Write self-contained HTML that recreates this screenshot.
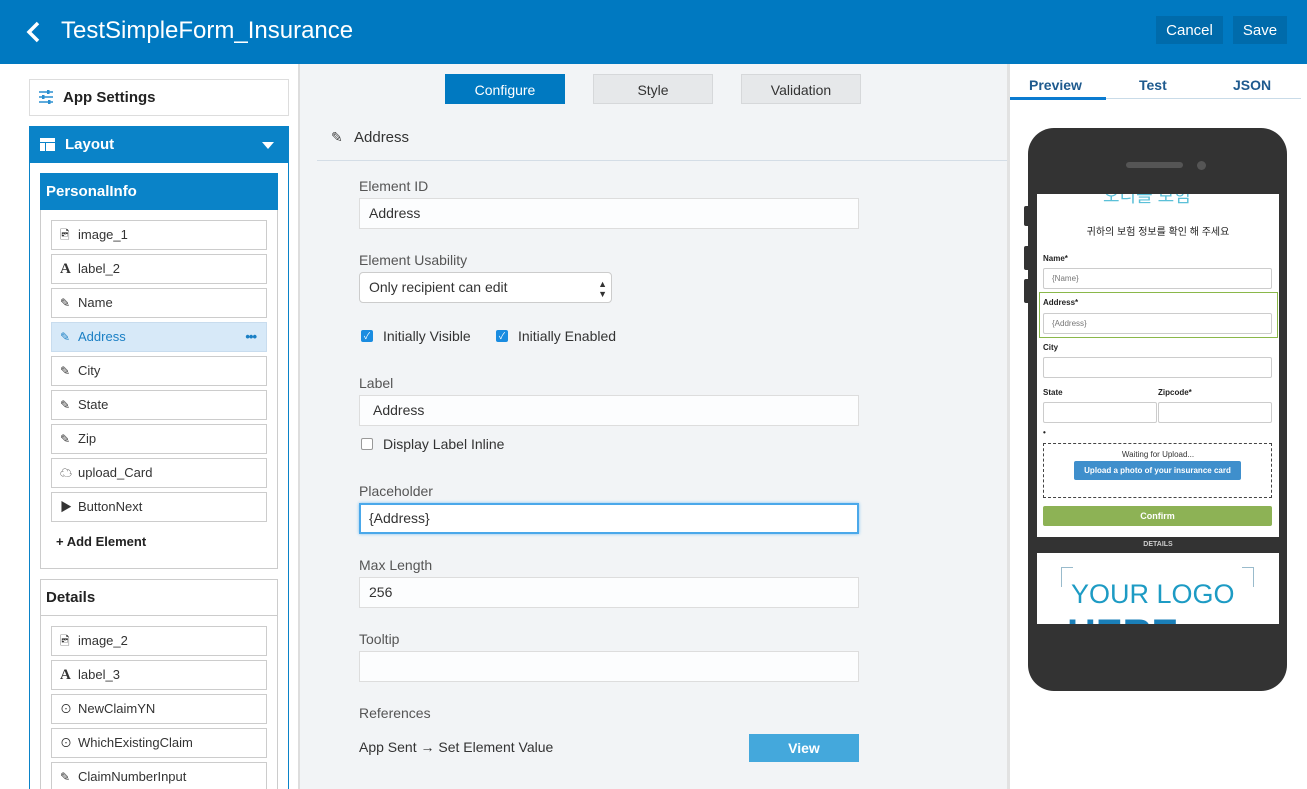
<!DOCTYPE html>
<html style="overflow:hidden"><head><meta charset="utf-8"><style>
*{box-sizing:border-box;margin:0;padding:0}
html,body{width:1307px;height:789px;overflow:hidden}
body{font-family:"Liberation Sans","Noto Sans CJK KR",sans-serif;background:#f2f4f6;position:relative;color:#333}
.abs{position:absolute}
.hdr{left:0;top:0;width:1307px;height:64px;background:#0079c1}
.hbtn{top:16px;height:28px;background:#006bab;color:#fff;font-size:15px;line-height:28px;text-align:center}
.left{left:0;top:64px;width:300px;height:725px;background:#fff;border-right:2px solid #ddd}
.item{left:51px;width:216px;height:30px;border:1px solid #ccc;background:#fff;font-size:13px;line-height:28px;padding-left:26px;color:#333}
.item i{position:absolute;left:8px;top:0;font-style:normal;font-size:12px}
.tab{top:74px;width:120px;height:30px;font-size:14px;line-height:30px;text-align:center;background:#e6e8ea;border:1px solid #d6d8da;color:#333}
.lbl{left:359px;font-size:14px;color:#555}
.inp{left:359px;width:500px;height:31px;border:1px solid #ddd;background:#fcfdfe;font-size:14px;line-height:29px;padding-left:9px;color:#333}
.cb{width:12px;height:12px;background:#1a8ce0;border-radius:2px;color:#fff;font-size:9px;line-height:12px;text-align:center}
.right{left:1007px;top:64px;width:300px;height:725px;background:#fff}
.ph{font-size:8px;font-weight:bold;color:#222}
.pin{height:21px;border:1px solid #ccc;border-radius:2px;font-size:8px;color:#777;line-height:19px;padding-left:8px;background:#fff}
</style></head><body>
<div class="abs hdr"></div>
<svg class="abs" style="left:24px;top:20px" width="18" height="24"><path d="M14 3 L5 12 L14 21" stroke="#fff" stroke-width="3.5" fill="none"/></svg>
<div class="abs" style="left:61px;top:17px;color:#fff;font-size:24px">TestSimpleForm_Insurance</div>
<div class="abs hbtn" style="left:1156px;width:67px;line-height:29px">Cancel</div>
<div class="abs hbtn" style="left:1233px;width:54px;line-height:29px">Save</div>

<div class="abs left"></div>
<div class="abs" style="left:29px;top:79px;width:260px;height:37px;border:1px solid #ddd;background:#fff"></div>
<svg class="abs" style="left:39px;top:90px" width="14" height="14"><g stroke="#2a8fd0" stroke-width="1.6"><path d="M0 2H14M0 7H14M0 12H14"/></g><g fill="#2a8fd0"><rect x="8" y="0" width="2.5" height="4"/><rect x="3" y="5" width="2.5" height="4"/><rect x="9" y="10" width="2.5" height="4"/></g></svg>
<div class="abs" style="left:63px;top:89px;font-size:15px;font-weight:bold;color:#222">App Settings</div>
<div class="abs" style="left:29px;top:126px;width:260px;height:670px;border:1px solid #0a83c8;background:#fff"></div>
<div class="abs" style="left:29px;top:126px;width:260px;height:37px;background:#0a83c8"></div>
<svg class="abs" style="left:40px;top:138px" width="15" height="13"><rect x="0" y="0" width="15" height="4" fill="#fff"/><rect x="0" y="5" width="5" height="8" fill="#fff"/><rect x="6" y="5" width="9" height="8" fill="#fff"/></svg>
<div class="abs" style="left:65px;top:136px;font-size:15px;font-weight:bold;color:#fff">Layout</div>
<svg class="abs" style="left:262px;top:142px" width="12" height="7"><path d="M0 0H12L6 7Z" fill="#fff"/></svg>
<div class="abs" style="left:40px;top:173px;width:238px;height:396px;border:1px solid #ccc"></div>
<div class="abs" style="left:40px;top:173px;width:238px;height:37px;background:#0a83c8;color:#fff;font-weight:bold;font-size:15px;line-height:37px;padding-left:6px">PersonalInfo</div>
<div class="abs item" style="top:220px"><i>🖻</i>image_1</div>
<div class="abs item" style="top:254px"><i style="font-family:'Liberation Serif';font-size:15px;font-weight:bold">A</i>label_2</div>
<div class="abs item" style="top:288px"><i>✎</i>Name</div>
<div class="abs item" style="top:322px;background:#d7e9f8;border-color:#c8dcee;color:#1a7fc4"><i>✎</i>Address<span style="position:absolute;right:10px;font-weight:bold;letter-spacing:-1px">•••</span></div>
<div class="abs item" style="top:356px"><i>✎</i>City</div>
<div class="abs item" style="top:390px"><i>✎</i>State</div>
<div class="abs item" style="top:424px"><i>✎</i>Zip</div>
<div class="abs item" style="top:458px"><i>☁</i>upload_Card</div>
<div class="abs item" style="top:492px"><i>▶</i>ButtonNext</div>
<div class="abs" style="left:56px;top:534px;font-size:13px;font-weight:bold;color:#222">+ Add Element</div>
<div class="abs" style="left:40px;top:579px;width:238px;height:220px;border:1px solid #ccc"></div>
<div class="abs" style="left:40px;top:579px;width:238px;height:37px;border-bottom:1px solid #ccc;font-weight:bold;font-size:15px;line-height:37px;padding-left:6px;color:#222">Details</div>
<div class="abs item" style="top:626px"><i>🖻</i>image_2</div>
<div class="abs item" style="top:660px"><i style="font-family:'Liberation Serif';font-size:15px;font-weight:bold">A</i>label_3</div>
<div class="abs item" style="top:694px"><i>⊙</i>NewClaimYN</div>
<div class="abs item" style="top:728px"><i>⊙</i>WhichExistingClaim</div>
<div class="abs item" style="top:762px"><i>✎</i>ClaimNumberInput</div>

<div class="abs tab" style="left:445px;background:#0079c1;border-color:#0079c1;color:#fff">Configure</div>
<div class="abs tab" style="left:593px">Style</div>
<div class="abs tab" style="left:741px">Validation</div>
<div class="abs" style="left:331px;top:129px;font-size:14px;color:#444">✎</div>
<div class="abs" style="left:354px;top:129px;font-size:15px;color:#333">Address</div>
<div class="abs" style="left:317px;top:160px;width:690px;height:1px;background:#d4dde6"></div>
<div class="abs lbl" style="top:178px">Element ID</div>
<div class="abs inp" style="top:198px">Address</div>
<div class="abs lbl" style="top:252px">Element Usability</div>
<div class="abs inp" style="top:272px;width:253px;background:#fff;border-color:#ccc;border-radius:4px">Only recipient can edit<span style="position:absolute;right:4px;top:0;font-size:9px;line-height:10px;top:6px">▲<br>▼</span></div>
<div class="abs cb" style="left:361px;top:330px">✓</div>
<div class="abs" style="left:383px;top:328px;font-size:14px">Initially Visible</div>
<div class="abs cb" style="left:496px;top:330px">✓</div>
<div class="abs" style="left:518px;top:328px;font-size:14px">Initially Enabled</div>
<div class="abs lbl" style="top:375px">Label</div>
<div class="abs inp" style="top:395px;padding-left:13px">Address</div>
<div class="abs" style="left:361px;top:438px;width:12px;height:12px;border:1px solid #999;border-radius:2px;background:#fff"></div>
<div class="abs" style="left:383px;top:436px;font-size:14px">Display Label Inline</div>
<div class="abs lbl" style="top:483px">Placeholder</div>
<div class="abs inp" style="top:503px;border:2px solid #4aa8ea;box-shadow:0 0 3px #7cc0f0;background:#fff;line-height:27px;padding-left:8px">{Address}</div>
<div class="abs lbl" style="top:557px">Max Length</div>
<div class="abs inp" style="top:577px">256</div>
<div class="abs lbl" style="top:631px">Tooltip</div>
<div class="abs inp" style="top:651px"></div>
<div class="abs lbl" style="top:705px">References</div>
<div class="abs" style="left:359px;top:739px;font-size:14px">App Sent → Set Element Value</div>
<div class="abs" style="left:749px;top:734px;width:110px;height:28px;background:#44a8dc;color:#fff;font-size:14px;font-weight:bold;line-height:28px;text-align:center">View</div>

<div class="abs right"></div>
<div class="abs" style="left:1007px;top:64px;width:3px;height:725px;background:#e2e2e2"></div>
<div class="abs" style="left:1029px;top:77px;font-size:14px;font-weight:bold;color:#1e5a8e">Preview</div>
<div class="abs" style="left:1139px;top:77px;font-size:14px;font-weight:bold;color:#1e5a8e">Test</div>
<div class="abs" style="left:1233px;top:77px;font-size:14px;font-weight:bold;color:#1e5a8e">JSON</div>
<div class="abs" style="left:1010px;top:98px;width:291px;height:1px;background:#c9dbe8"></div>
<div class="abs" style="left:1010px;top:97px;width:96px;height:3px;background:#0a7bd0"></div>
<div class="abs" style="left:1028px;top:128px;width:259px;height:563px;background:#333;border-radius:26px"></div>
<div class="abs" style="left:1024px;top:206px;width:6px;height:20px;background:#333;border-radius:2px"></div>
<div class="abs" style="left:1024px;top:246px;width:6px;height:24px;background:#333;border-radius:2px"></div>
<div class="abs" style="left:1024px;top:279px;width:6px;height:24px;background:#333;border-radius:2px"></div>
<div class="abs" style="left:1126px;top:162px;width:57px;height:6px;background:#555;border-radius:3px"></div>
<div class="abs" style="left:1197px;top:161px;width:9px;height:9px;background:#555;border-radius:50%"></div>
<div class="abs" style="left:1037px;top:194px;width:242px;height:430px;background:#fff;overflow:hidden">
 <div class="abs" style="left:66px;top:-12px;font-size:18px;color:#5bc0d8">오디올 보험</div>
 <div class="abs" style="left:0;width:242px;top:29px;text-align:center;font-size:10px;color:#222">귀하의 보험 정보를 확인 해 주세요</div>
 <div class="abs ph" style="left:6px;top:60px">Name*</div>
 <div class="abs pin" style="left:6px;top:74px;width:229px">{Name}</div>
 <div class="abs" style="left:2px;top:98px;width:239px;height:46px;border:1px solid #8ab84a"></div>
 <div class="abs ph" style="left:6px;top:104px">Address*</div>
 <div class="abs pin" style="left:6px;top:119px;width:229px">{Address}</div>
 <div class="abs ph" style="left:6px;top:149px">City</div>
 <div class="abs pin" style="left:6px;top:163px;width:229px"></div>
 <div class="abs ph" style="left:6px;top:194px">State</div>
 <div class="abs ph" style="left:121px;top:194px">Zipcode*</div>
 <div class="abs pin" style="left:6px;top:208px;width:114px"></div>
 <div class="abs pin" style="left:121px;top:208px;width:114px"></div>
 <div class="abs ph" style="left:6px;top:234px">•</div>
 <div class="abs" style="left:6px;top:249px;width:229px;height:55px;border:1px dashed #444"></div>
 <div class="abs" style="left:0;width:242px;top:256px;text-align:center;font-size:8px;color:#333">Waiting for Upload...</div>
 <div class="abs" style="left:37px;top:267px;width:167px;height:19px;background:#3f8fcc;color:#fff;font-size:8px;font-weight:bold;line-height:19px;text-align:center;border-radius:2px">Upload a photo of your insurance card</div>
 <div class="abs" style="left:6px;top:312px;width:229px;height:20px;background:#8db255;color:#fff;font-size:9px;font-weight:bold;line-height:20px;text-align:center;border-radius:2px">Confirm</div>
 <div class="abs" style="left:0;top:343px;width:242px;height:16px;background:#333;color:#ccc;font-size:7px;font-weight:bold;line-height:16px;text-align:center">DETAILS</div>
 <div class="abs" style="left:24px;top:373px;width:12px;height:20px;border-left:1px solid #9bc;border-top:1px solid #9bc"></div>
 <div class="abs" style="left:205px;top:373px;width:12px;height:20px;border-right:1px solid #9bc;border-top:1px solid #9bc"></div>
 <div class="abs" style="left:34px;top:385px;font-size:27px;color:#1d9bc4">YOUR LOGO</div>
 <div class="abs" style="left:30px;top:418px;font-size:40px;font-weight:bold;color:#1a7fb8">HERE</div>
</div>
</body></html>
